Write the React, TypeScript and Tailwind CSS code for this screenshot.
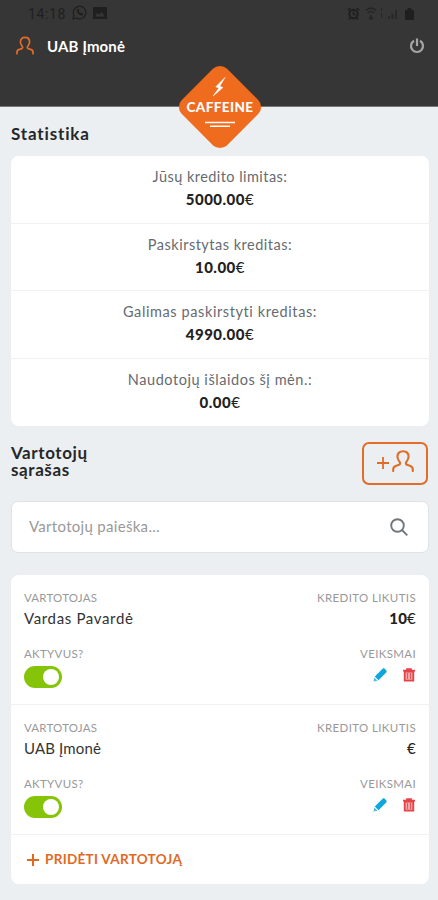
import React, { useState } from "react";
import clsx from "clsx";

interface Stat {
  label: string;
  value: string;
  labelClass: string;
}

interface User {
  id: number;
  name: string;
  credit: string;
  nameClass: string;
}

const stats: Stat[] = [
  { label: "Jūsų kredito limitas:", value: "5000.00", labelClass: "tracking-[0.45px]" },
  { label: "Paskirstytas kreditas:", value: "10.00", labelClass: "tracking-[0.5px]" },
  { label: "Galimas paskirstyti kreditas:", value: "4990.00", labelClass: "tracking-[0.6px]" },
  { label: "Naudotojų išlaidos šį mėn.:", value: "0.00", labelClass: "tracking-[0.55px]" },
];

const users: User[] = [
  { id: 1, name: "Vardas Pavardė", credit: "10", nameClass: "tracking-[0.65px]" },
  { id: 2, name: "UAB Įmonė", credit: "", nameClass: "tracking-[0.15px]" },
];

const PersonIcon = ({ className }: { className?: string }) => (
  <svg viewBox="0 0 22 22" className={className} fill="none" stroke="currentColor" strokeWidth="2.1" strokeLinecap="round" strokeLinejoin="round">
    <path d="M1.2 21v-1.6c0-2.2 1-3.2 3-3.7l2.2-.6c1.800-.5 2.1-1.8 1.2-3.200C6.200 10.200 5.400 8.600 5.400 6.600 5.400 3.200 7.700 1.200 11 1.200s5.600 2 5.600 5.400c0 2-.8 3.600-2.200 5.300-.9 1.400-.6 2.700 1.200 3.200l2.200.6c2 .5 3 1.500 3 3.700V21" />
  </svg>
);

const StatusBar = () => (
  <div className="flex h-[27px] items-center justify-between pl-7 pr-6 text-[#1f1f1f]">
    <div className="flex items-center gap-[6px]">
      <span className="w-[38px] font-['Roboto',sans-serif] text-[14px] leading-none tracking-[0.6px]">14:18</span>
      <svg viewBox="0 0 15 15" className="h-[15px] w-[15px] -translate-y-px" fill="none" stroke="currentColor" strokeWidth="1.2">
        <path d="M1 14l1-3.600A6.300 6.300 0 1 1 4.500 13z" />
        <path d="M5 4.500c-.6 2.600 2.500 6 5.300 5.700l.7-1.500-1.800-.9-.8.8C7.400 8.200 6.700 7.300 6.400 6.600l.7-.8L6.300 4z" fill="currentColor" strokeWidth="0.5" />
      </svg>
      <svg viewBox="0 0 14 12" className="h-[12px] w-[14px] -translate-y-px">
        <path fillRule="evenodd" fill="currentColor" d="M0 0h14v12H0zM2 9.500h10L8.500 5 6 7.800 4 6z" />
      </svg>
    </div>
    <div className="flex items-center">
      <svg viewBox="0 0 13 13" className="h-[13px] w-[13px]" fill="none" stroke="currentColor" strokeWidth="2">
        <circle cx="6.5" cy="7" r="4.2" />
        <path d="M.8 3.200L3.200 1M12.200 3.200L9.800 1M6.500 4.500V7.500H8.500M3 11l-1 1.500M10 11l1 1.500" strokeWidth="1.5" />
      </svg>
      <svg viewBox="0 0 12 13" className="ml-[5px] h-[13px] w-[12px]" fill="none" stroke="currentColor" strokeWidth="1.5" opacity="0.7">
        <path d="M.8 3.500C4 .6 8 .6 11.200 3.500M2.800 6c2-1.800 4.400-1.800 6.400 0M6 8v4.500M4 10.500l2 2 2-2" />
      </svg>
      <svg viewBox="0 0 18 13" className="ml-[4px] h-[13px] w-[18px]" fill="currentColor" opacity="0.6">
        <path d="M0 1h1v3H0zM0 6h1v5H0zM7 9h2v3H7zM10.500 6.500h2V12h-2zM14 3h2v9h-2z" />
      </svg>
      <svg viewBox="0 0 9 12" className="ml-[6px] h-[12px] w-[9px]" fill="currentColor">
        <path d="M2.500 0h4v2H9v10H0V2h2.500z" />
      </svg>
    </div>
  </div>
);

const Logo = () => (
  <div className="absolute left-[176px] top-[63px] h-[88px] w-[88px]">
    <svg viewBox="0 0 88 88" className="absolute inset-0 h-full w-full">
      <rect x="12" y="12" width="64" height="64" rx="10" fill="#ef6b1e" transform="rotate(45 44 44)" />
      <path d="M49 14.500L39.800 23.800l3.200 1.100-5.800 8 9.700-8.300-3.200-1.400z" fill="#fff" stroke="#fff" strokeWidth="0.6" />
      <path d="M29 59.500h30M34 63.300h20" stroke="#fff" strokeWidth="1.5" />
    </svg>
    <span className="absolute inset-x-0 top-[36px] text-center font-['Lato',sans-serif] text-[13.5px] font-black leading-[16px] tracking-[0.4px] text-white">
      CAFFEINE
    </span>
  </div>
);

const Switch = () => {
  const [on, setOn] = useState(true);

  return (
    <button
      onClick={() => setOn(!on)}
      className={clsx(
        "flex h-[22px] w-[38px] items-center rounded-full px-[3px]",
        on ? "justify-end bg-[#86c40a]" : "justify-start bg-gray-300"
      )}
    >
      <span className="h-4 w-4 rounded-full bg-white" />
    </button>
  );
};

const PencilIcon = () => (
  <svg viewBox="0 0 14 14" className="h-[14px] w-[14px]" fill="#0fa6dc">
    <path d="M9.600.8c.6-.6 1.500-.6 2.100 0l1.500 1.500c.6.600.6 1.500 0 2.100L5.500 12.200 1.800 8.500z" />
    <path d="M1.200 9.400l3.400 3.400-4 .7z" opacity="0.75" />
  </svg>
);

const TrashIcon = () => (
  <svg viewBox="0 0 12 14" className="h-[14px] w-[12px]" fill="none" stroke="#e5424a">
    <path d="M1.700 3.500h8.600v9.200H1.700z" fill="#f6a5a8" strokeWidth="1.8" />
    <path d="M0 2.700h12M4 2.500V1h4v1.500" strokeWidth="1.7" />
    <path d="M4.500 5v6M7.500 5v6" strokeWidth="0.8" />
  </svg>
);

const UserRow = ({ user }: { user: User }) => (
  <div className="flex h-[130px] justify-between border-b border-[#f0f1f2] px-[13px] pt-[15px]">
    <div>
      <div className="text-[11.5px] leading-4 tracking-[0.2px] text-[#999]">VARTOTOJAS</div>
      <div className={clsx("mt-[2px] text-[15px] leading-5 text-[#333]", user.nameClass)}>{user.name}</div>
      <div className="mb-[4px] mt-[18px] text-[11.5px] leading-4 tracking-[0.3px] text-[#999]">AKTYVUS?</div>
      <Switch />
    </div>
    <div className="flex flex-col items-end">
      <div className="text-[11.5px] leading-4 tracking-[0.37px] text-[#999]">KREDITO LIKUTIS</div>
      <div className="mt-[2px] text-[15px] leading-5 tracking-[0.2px] text-[#222]">
        <b className="font-black">{user.credit}</b>€
      </div>
      <div className="mt-[18px] text-[11.5px] leading-4 tracking-[0.35px] text-[#999]">VEIKSMAI</div>
      <div className="mt-[6px] flex gap-[16px] pr-px">
        <PencilIcon />
        <TrashIcon />
      </div>
    </div>
  </div>
);

const App: React.FC = () => {
  const [search, setSearch] = useState("");

  return (
    <div className="relative h-[900px] w-[438px] overflow-hidden bg-[#ebeff2] font-['Lato',sans-serif]">
      <header className="h-[107px] border-b border-[#777] bg-[#363636]">
        <StatusBar />
        <div className="flex items-center justify-between pl-4 pr-[13px] pt-[9px]">
          <div className="flex items-center">
            <PersonIcon className="h-[19px] w-[18px] -translate-y-px text-[#df6d27]" />
            <span className="ml-[13px] text-[15px] font-bold leading-5 tracking-[0.15px] text-white">UAB Įmonė</span>
          </div>
          <svg viewBox="0 0 16 16" className="h-4 w-4" fill="none" stroke="#a5a5a5" strokeWidth="2.2">
            <path d="M5 2.800a6 6 0 1 0 6 0M8 .5v7.500" />
          </svg>
        </div>
      </header>
      <Logo />

      <main className="pl-[11px] pr-[9px]">
        <h2 className="pt-4 text-[17px] font-bold leading-[22px] tracking-[0.85px] text-[#252728]">Statistika</h2>

        <section className="mt-[11px] h-[270px] rounded-[8px] bg-white">
          {stats.map((stat) => (
            <div
              key={stat.label}
              className="h-[67.7px] border-b border-[#f0f1f2] pt-[11px] text-center last:border-b-0"
            >
              <div className={clsx("text-[14.5px] leading-[20px] text-[#666b6f]", stat.labelClass)}>{stat.label}</div>
              <div className="mt-[2px] text-[15px] leading-5 tracking-[0.5px] text-[#222]">
                <b className="font-black">{stat.value}</b>€
              </div>
            </div>
          ))}
        </section>

        <div className="mt-[16px] flex h-[43px] items-start justify-between">
          <h2 className="mt-[2px] text-[17px] font-bold leading-[17px] tracking-[0.6px] text-[#252728]">
            Vartotojų
            <br />
            sąrašas
          </h2>
          <button className="mr-px flex h-[43px] w-[66px] items-center justify-center gap-[3px] rounded-[7px] border-2 border-[#e36c29] pb-[5px] text-[#df6d27]">
            <svg viewBox="0 0 12 12" className="mt-[3px] h-3 w-3" stroke="currentColor" strokeWidth="1.8">
              <path d="M6 0v12M0 6h12" />
            </svg>
            <PersonIcon className="h-[22px] w-[22px]" />
          </button>
        </div>

        <label className="mt-[16px] flex h-[52px] items-center rounded-[7px] border border-[#dfe3e6] bg-white pb-[2px] pl-[17px] pr-[20px]">
          <input
            value={search}
            onChange={(e) => setSearch(e.target.value)}
            placeholder="Vartotojų paieška..."
            className="min-w-0 flex-1 text-[15px] tracking-[0.3px] outline-none placeholder:text-[#999]"
          />
          <svg viewBox="0 0 18 18" className="mt-[2px] h-[18px] w-[18px]" fill="none" stroke="#72777b" strokeWidth="1.9">
            <circle cx="7.5" cy="7.5" r="6.3" />
            <path d="M12 12l5.300 5.300" />
          </svg>
        </label>

        <section className="mt-[22px] h-[309px] rounded-[8px] bg-white">
          {users.map((user) => (
            <UserRow key={user.id} user={user} />
          ))}
          <button className="flex h-[49px] items-center pl-4 text-[13.5px] font-bold tracking-[0.3px] text-[#e1691f]">
            <svg viewBox="0 0 12 12" className="mr-[6px] h-3 w-3" stroke="currentColor" strokeWidth="2">
              <path d="M6 0v12M0 6h12" />
            </svg>
            PRIDĖTI VARTOTOJĄ
          </button>
        </section>
      </main>
    </div>
  );
};

export default App;
